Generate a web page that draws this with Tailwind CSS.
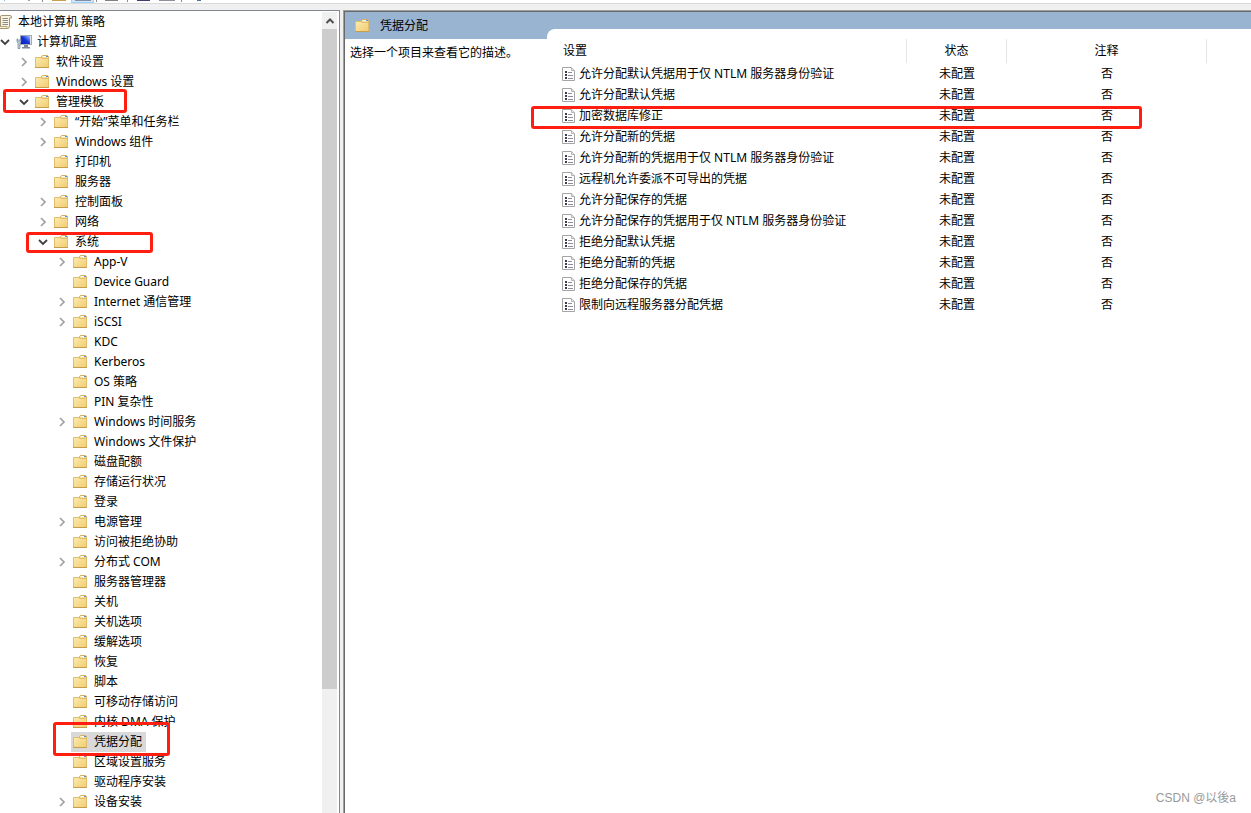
<!DOCTYPE html>
<html lang="zh-CN">
<head>
  <meta charset="UTF-8">
  <meta name="viewport" content="width=device-width, initial-scale=1.0">
  <title>本地组策略编辑器</title>
  <script src="https://cdn.jsdelivr.net/npm/@tailwindcss/browser@4"></script>
</head>
<body class="bg-[#f0f0f0] text-black text-[12px] leading-5 font-['Noto_Sans','Noto_Sans_CJK_SC',sans-serif] overflow-hidden">

<!-- Icons -->
<svg class="absolute size-0" aria-hidden="true">
  <defs>
    <linearGradient id="folder-fill" x1="0" y1="0" x2="1" y2="1">
      <stop offset="0" stop-color="#fdebb0"/>
      <stop offset="1" stop-color="#f0cc70"/>
    </linearGradient>
    <linearGradient id="screen-fill" x1="0" y1="1" x2="1" y2="0">
      <stop offset="0" stop-color="#0a1eb4"/>
      <stop offset="0.5" stop-color="#1432dc"/>
      <stop offset="1" stop-color="#a0c8ff"/>
    </linearGradient>
  </defs>
  <symbol id="icon-folder" viewBox="0 0 16 16">
    <path d="M6.5 4.500V2.500L7.500 1.500H12.500L13.500 2.500V5H6.5Z" fill="#f7e0a0" stroke="#d3b063"/>
    <path d="M8 2.500H11" stroke="#fff"/>
    <path d="M11 2.500H13" stroke="#4a90d9"/>
    <path d="M0.500 3.500H6L7 4.500H13.500V13.500H0.500Z" fill="url(#folder-fill)" stroke="#e0bd6c"/>
    <path d="M0 13.500H14" stroke="#c59d4c"/>
  </symbol>
  <symbol id="icon-scroll" viewBox="0 0 16 16">
    <path d="M4.500 1.500H13Q15 1.500 14.500 4H12.500V12Q12.500 14.500 10.500 14.500H2.500Q1.500 14 1.500 12H3.500V3Q3.500 1.500 4.500 1.500Z" fill="#faf3dc" stroke="#a39473"/>
    <path d="M5.500 4.500H11M5.500 6.500H11M5.500 8.500H11M5.500 10.500H11" stroke="#8c8c94"/>
    <path d="M2 12.500H10V14" fill="none" stroke="#b9a77c"/>
  </symbol>
  <symbol id="icon-computer" viewBox="0 0 16 16">
    <rect x="4.500" y="1.500" width="11" height="9" fill="#dfe3ea" stroke="#a4abb8"/>
    <rect x="5" y="2" width="9" height="8" fill="url(#screen-fill)"/>
    <path d="M8 11H12V13H14V14.500H6V13H8Z" fill="#7e8796"/>
    <path d="M1 5V8L2 9V14.500H4V9L5 8V5H4V7H2V5Z" fill="#c6d4e2" stroke="#52718f" stroke-width="0.600"/>
  </symbol>
  <symbol id="icon-policy" viewBox="0 0 14 16">
    <path d="M0.500 1.500H9.500L12.500 4.500V14.500H0.500Z" fill="#fff" stroke="#a4a4a4"/>
    <path d="M9.500 1.500V4.500H12.500" fill="#e4e4e4" stroke="#b5b5b5"/>
    <path d="M3 5H5V7H3ZM3 8H5V10H3ZM3 11H5V13H3Z" fill="#3c3c46"/>
    <path d="M6 6.500H10M6 9.500H11M6 12.500H11" stroke="#8c8ca0"/>
  </symbol>
  <symbol id="icon-right" viewBox="0 0 10 10">
    <path d="M3 1L7 5L3 9" fill="none" stroke="#a0a0a0" stroke-width="1.700"/>
  </symbol>
  <symbol id="icon-down" viewBox="0 0 10 10">
    <path d="M1 3L5 7L9 3" fill="none" stroke="#404040" stroke-width="1.800"/>
  </symbol>
  <symbol id="icon-up" viewBox="0 0 10 10">
    <path d="M1.500 7L5 3.500L8.500 7" fill="none" stroke="#505050" stroke-width="2"/>
  </symbol>
</svg>

<div class="relative flex flex-col h-screen">
  <!-- Toolbar, scrolled almost out of view -->
  <div class="h-1 shrink-0 bg-white border-b border-[#d9d9d9] flex items-start overflow-hidden">
    <div class="ml-[4px] w-px h-px bg-[#80c0e8]"></div>
    <div class="ml-[23px] w-[2px] h-px bg-[#a0a0a0]"></div>
    <div class="ml-[12px] w-px h-[2px] bg-[#8c8c8c]"></div>
    <div class="ml-[9px] w-[14px] h-px bg-[#c8a050]"></div>
    <div class="ml-[5px] w-[23px] h-[3px] bg-[#cce8ff] border-x border-b border-[#99d1ff] flex justify-center">
      <div class="w-4 h-px bg-[#8c8ca0]"></div>
    </div>
    <div class="ml-[2px] w-px h-[2px] bg-[#8c8c8c]"></div>
    <div class="ml-[8px] w-[13px] h-px bg-[#808080]"></div>
    <div class="ml-[9px] w-px h-[2px] bg-[#8c8c8c]"></div>
    <div class="ml-[9px] w-[13px] h-px bg-[#404070]"></div>
    <div class="ml-[9px] w-4 h-px bg-[#909098]"></div>
    <div class="ml-[6px] w-px h-[2px] bg-[#8c8c8c]"></div>
    <div class="ml-[15px] w-1 h-px bg-[#5070a0]"></div>
  </div>

  <div class="flex flex-1 min-h-0 pt-[6px]">
    <!-- Tree -->
    <nav class="w-[340px] shrink-0 flex bg-white border-t border-r border-[#828790] pt-px">
      <ul id="tree" class="flex-1 overflow-hidden"></ul>
      <div class="w-[15px] mr-[2px] bg-[#f0f0f0] flex flex-col">
        <button class="h-[17px] flex items-center justify-center" aria-label="向上滚动">
          <svg class="size-[10px]"><use href="#icon-up"/></svg>
        </button>
        <div class="h-[660px] bg-[#cdcdcd]"></div>
      </div>
    </nav>

    <!-- Details -->
    <main class="ml-[3px] flex-1 min-w-0 flex flex-col border-t border-l border-[#a0a0a0]">
      <div class="flex-1 flex flex-col border-t border-l border-[#696969] bg-[#99b4d1]">
        <div class="flex flex-1">
          <section class="w-[202px] shrink-0 flex flex-col">
            <h1 class="h-[27px] pl-[10px] flex items-center gap-[9px]">
              <svg class="size-4"><use href="#icon-folder"/></svg>凭据分配
            </h1>
            <p class="flex-1 bg-white pl-[5px] pt-1">选择一个项目来查看它的描述。</p>
          </section>
          <section class="flex-1 mt-[17px] pt-[10px] bg-white rounded-tl-lg">
            <table class="w-[660px] table-fixed border-separate border-spacing-0">
              <thead>
              <tr class="h-6">
                <th class="w-[360px] p-0 pl-4 text-left font-normal border-r border-[#e5e5e5]">设置</th>
                <th class="w-[100px] p-0 font-normal border-r border-[#e5e5e5]">状态</th>
                <th class="w-[200px] p-0 font-normal border-r border-[#e5e5e5]">注释</th>
              </tr>
              </thead>
              <tbody id="settings"></tbody>
            </table>
          </section>
        </div>
      </div>
    </main>
  </div>

  <!-- Callouts -->
  <div class="absolute left-[3px] top-[89px] w-[124px] h-6 border-3 border-[#ff1e10] rounded-[3px]"></div>
  <div class="absolute left-[26px] top-[232px] w-[127px] h-[21px] border-3 border-[#ff1e10] rounded-[3px]"></div>
  <div class="absolute left-[53px] top-[722px] w-[117px] h-[34px] border-3 border-[#ff1e10] rounded-[3px]"></div>
  <div class="absolute left-[531px] top-[106px] w-[611px] h-[23px] border-3 border-[#ff1e10] rounded-[3px]"></div>
  <div class="absolute right-[15px] bottom-[5px] text-[#999] font-['Liberation_Sans','Noto_Sans_CJK_SC',sans-serif]">CSDN @以後a</div>
</div>

<script>
  // [level, state, label]; state: '>' closed, 'v' open, '' leaf
  const tree = [
    [0, '', '本地计算机 策略'],
    [1, 'v', '计算机配置'],
    [2, '>', '软件设置'],
    [2, '>', 'Windows 设置'],
    [2, 'v', '管理模板'],
    [3, '>', '“开始”菜单和任务栏'],
    [3, '>', 'Windows 组件'],
    [3, '', '打印机'],
    [3, '', '服务器'],
    [3, '>', '控制面板'],
    [3, '>', '网络'],
    [3, 'v', '系统'],
    [4, '>', 'App-V'],
    [4, '', 'Device Guard'],
    [4, '>', 'Internet 通信管理'],
    [4, '>', 'iSCSI'],
    [4, '', 'KDC'],
    [4, '', 'Kerberos'],
    [4, '', 'OS 策略'],
    [4, '', 'PIN 复杂性'],
    [4, '>', 'Windows 时间服务'],
    [4, '', 'Windows 文件保护'],
    [4, '', '磁盘配额'],
    [4, '', '存储运行状况'],
    [4, '', '登录'],
    [4, '>', '电源管理'],
    [4, '', '访问被拒绝协助'],
    [4, '>', '分布式 COM'],
    [4, '', '服务器管理器'],
    [4, '', '关机'],
    [4, '', '关机选项'],
    [4, '', '缓解选项'],
    [4, '', '恢复'],
    [4, '', '脚本'],
    [4, '', '可移动存储访问'],
    [4, '', '内核 DMA 保护'],
    [4, '', '凭据分配'],
    [4, '', '区域设置服务'],
    [4, '', '驱动程序安装'],
    [4, '>', '设备安装']
  ];
  const selected = '凭据分配';

  const settings = [
    '允许分配默认凭据用于仅 NTLM 服务器身份验证',
    '允许分配默认凭据',
    '加密数据库修正',
    '允许分配新的凭据',
    '允许分配新的凭据用于仅 NTLM 服务器身份验证',
    '远程机允许委派不可导出的凭据',
    '允许分配保存的凭据',
    '允许分配保存的凭据用于仅 NTLM 服务器身份验证',
    '拒绝分配默认凭据',
    '拒绝分配新的凭据',
    '拒绝分配保存的凭据',
    '限制向远程服务器分配凭据'
  ];

  const indents = ['-ml-[24px]', '-ml-[5px]', 'ml-[14px]', 'ml-[33px]', 'ml-[52px]'];
  const chevrons = { '>': '#icon-right', 'v': '#icon-down' };
  const icons = ['#icon-scroll', '#icon-computer'];

  document.getElementById('tree').innerHTML = tree.map(([level, state, label]) => `
    <li class="h-5 flex items-center whitespace-nowrap">
      <span class="${indents[level]} w-[19px] shrink-0 flex justify-center">
        ${state ? `<svg class="size-[10px]"><use href="${chevrons[state]}"/></svg>` : ''}
      </span>
      <span class="h-5 flex items-center gap-[5px] pl-[2px] pr-1 ${label === selected ? 'bg-[#d9d9d9]' : ''}">
        <svg class="size-4"><use href="${icons[level] || '#icon-folder'}"/></svg>${label}
      </span>
    </li>
  `).join('');

  document.getElementById('settings').innerHTML = settings.map((name) => `
    <tr class="h-[21px]">
      <td class="p-0 pl-[15px]">
        <div class="flex items-center gap-[3px] whitespace-nowrap">
          <svg class="w-[14px] h-4"><use href="#icon-policy"/></svg>${name}
        </div>
      </td>
      <td class="p-0 text-center">未配置</td>
      <td class="p-0 text-center">否</td>
    </tr>
  `).join('');
</script>
</body>
</html>
